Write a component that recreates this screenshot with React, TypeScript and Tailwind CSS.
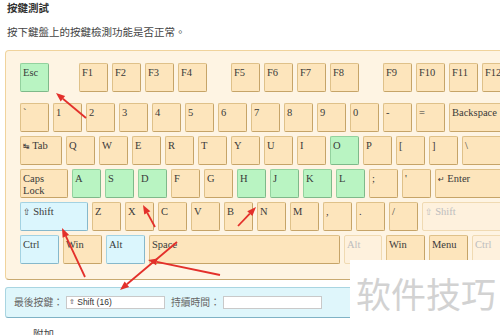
import React from "react";

type Tone = "normal" | "green" | "blue" | "faded";

interface KeyDef {
  label: React.ReactNode;
  w?: number;
  tone?: Tone;
  ml?: string;
}

const toneClass: Record<Tone, string> = {
  normal: "bg-[#fde5bc] border-[#dfc189] border-b-[#c6a468] border-r-[#c6a468] text-[#3a3a3a]",
  green: "bg-[#b9f4c2] border-[#93d29e] border-b-[#7fb98a] border-r-[#7fb98a] text-[#3a3a3a]",
  blue: "bg-[#dbf6fd] border-[#a3d2e2] border-b-[#86b8cb] border-r-[#86b8cb] text-[#3a3a3a]",
  faded: "bg-[#fef1dd] border-[#f0dab2] text-[#bdbdbd]",
};

function Key({ label, w = 29, tone = "normal", ml = "" }: KeyDef) {
  return (
    <div
      className={`h-[29px] shrink-0 rounded-[2px] border px-[2px] pt-[3px] text-[10.5px] leading-[12px] ${toneClass[tone]} ${ml}`}
      style={{ width: w }}
    >
      {label}
    </div>
  );
}

const row1: KeyDef[] = [
  { label: "Esc", tone: "green" },
  { label: "F1", ml: "ml-[26px]" },
  { label: "F2" },
  { label: "F3" },
  { label: "F4" },
  { label: "F5", ml: "ml-[20px]" },
  { label: "F6" },
  { label: "F7" },
  { label: "F8" },
  { label: "F9", ml: "ml-[20px]" },
  { label: "F10" },
  { label: "F11" },
  { label: "F12" },
];

const row2: KeyDef[] = [
  { label: "`" },
  ...["1", "2", "3", "4", "5", "6", "7", "8", "9", "0", "-", "="].map((k) => ({ label: k })),
  { label: "Backspace", w: 62 },
];

const row3: KeyDef[] = [
  { label: <span><span className="font-['DejaVu_Sans'] text-[8px]">↹</span> Tab</span>, w: 42 },
  ...["Q", "W", "E", "R", "T", "Y", "U", "I"].map((k) => ({ label: k })),
  { label: "O", tone: "green" as Tone },
  ...["P", "[", "]"].map((k) => ({ label: k })),
  { label: "\\", w: 50 },
];

const row4: KeyDef[] = [
  { label: <span>Caps<br />Lock</span>, w: 48 },
  { label: "A", tone: "green" },
  { label: "S", tone: "green" },
  { label: "D", tone: "green" },
  { label: "F" },
  { label: "G" },
  { label: "H", tone: "green" },
  { label: "J", tone: "green" },
  { label: "K", tone: "green" },
  { label: "L", tone: "green" },
  { label: ";" },
  { label: "'" },
  { label: <span><span className="font-['DejaVu_Sans'] text-[8px]">↵</span> Enter</span>, w: 76 },
];

const row5: KeyDef[] = [
  { label: <span><span className="font-['DejaVu_Sans'] text-[9px]">⇧</span> Shift</span>, w: 68, tone: "blue" },
  ...["Z", "X", "C", "V", "B", "N", "M", ",", ".", "/"].map((k) => ({ label: k })),
  { label: <span><span className="font-['DejaVu_Sans'] text-[9px]">⇧</span> Shift</span>, w: 90, tone: "faded" as Tone },
];

const row6: KeyDef[] = [
  { label: "Ctrl", w: 39, tone: "blue" },
  { label: "Win", w: 39 },
  { label: "Alt", w: 39, tone: "blue" },
  { label: "Space", w: 191 },
  { label: "Alt", w: 38, tone: "faded" },
  { label: "Win", w: 39 },
  { label: "Menu", w: 39 },
  { label: "Ctrl", w: 39, tone: "faded" },
];

const arrows: [number, number, number, number][] = [
  [86, 118, 56, 93],
  [155, 227, 143, 205],
  [238, 226, 256, 207],
  [85, 277, 62, 228],
  [220, 275, 148, 260],
  [177, 242, 120, 290],
];

function Arrow({ a }: { a: [number, number, number, number] }) {
  const [x1, y1, x2, y2] = a;
  const dx = x2 - x1;
  const dy = y2 - y1;
  const len = Math.hypot(dx, dy);
  const ux = dx / len;
  const uy = dy / len;
  const hl = 9;
  const hw = 3.5;
  const bx = x2 - ux * hl;
  const by = y2 - uy * hl;
  const pts = `${x2},${y2} ${bx - uy * hw},${by + ux * hw} ${bx + uy * hw},${by - ux * hw}`;
  return (
    <g>
      <line x1={x1} y1={y1} x2={bx} y2={by} stroke="#e3302b" strokeWidth={1.8} />
      <polygon points={pts} fill="#e3302b" />
    </g>
  );
}

function Row({ keys, className = "" }: { keys: KeyDef[]; className?: string }) {
  return (
    <div className={`flex gap-[4px] ${className}`}>
      {keys.map((k, i) => (
        <Key key={i} {...k} />
      ))}
    </div>
  );
}

export default function App() {
  return (
    <div className="relative h-[335px] w-[500px] overflow-hidden bg-white font-['Noto_Sans_CJK_TC',sans-serif] text-[#333]">
      <div className="px-[7px] text-[10.5px] leading-[16px]">
        <div className="font-bold">按鍵測試</div>
        <div className="mt-[8px] text-[#444]">按下鍵盤上的按鍵檢測功能是否正常。</div>
      </div>

      {/* Keyboard */}
      <div className="ml-[5px] mt-[10px] w-[580px] rounded-[4px] border border-[#f0d39c] border-b-[#c9aa72] bg-[#fef4e3] pb-[15px] pl-[14px] pt-[12px] font-['Liberation_Serif',serif]">
        <Row keys={row1} className="mb-[11px]" />
        <div className="flex flex-col gap-[4px]">
          <Row keys={row2} />
          <Row keys={row3} />
          <Row keys={row4} />
          <Row keys={row5} />
          <Row keys={row6} />
        </div>
      </div>

      {/* Last key box */}
      <div className="ml-[5px] mt-[7px] flex h-[31px] w-[580px] items-center rounded-[3px] border border-[#a9d5e1] border-b-[#7fb2c5] bg-[#dff6fb] pl-[8px] text-[9.8px] text-[#666]">
        <span>最後按鍵：</span>
        <div className="ml-[3px] flex h-[13px] w-[99px] items-center border border-[#c9c9c9] bg-white pl-[2px] font-['Liberation_Sans',sans-serif] text-[8.5px] text-[#333]">
          <span className="font-['DejaVu_Sans'] text-[7px]">⇧</span>&nbsp;Shift (16)
        </div>
        <span className="ml-[6px]">持續時間：</span>
        <div className="ml-[3px] h-[13px] w-[99px] border border-[#c9c9c9] bg-white" />
      </div>

      <div className="ml-[33px] mt-[8px] text-[10.5px] leading-[16px] text-[#444]">附加</div>

      <svg className="pointer-events-none absolute left-0 top-0" width={500} height={335}>
        {arrows.map((a, i) => (
          <Arrow key={i} a={a} />
        ))}
      </svg>

      {/* watermark */}
      <div className="absolute left-[350px] top-[260px] h-[75px] w-[150px] bg-white pl-[6px] pt-[15px] font-['Noto_Sans_CJK_SC',sans-serif] text-[35px] leading-[36px] text-[#d2d2d2]">
        软件技巧
      </div>
    </div>
  );
}
